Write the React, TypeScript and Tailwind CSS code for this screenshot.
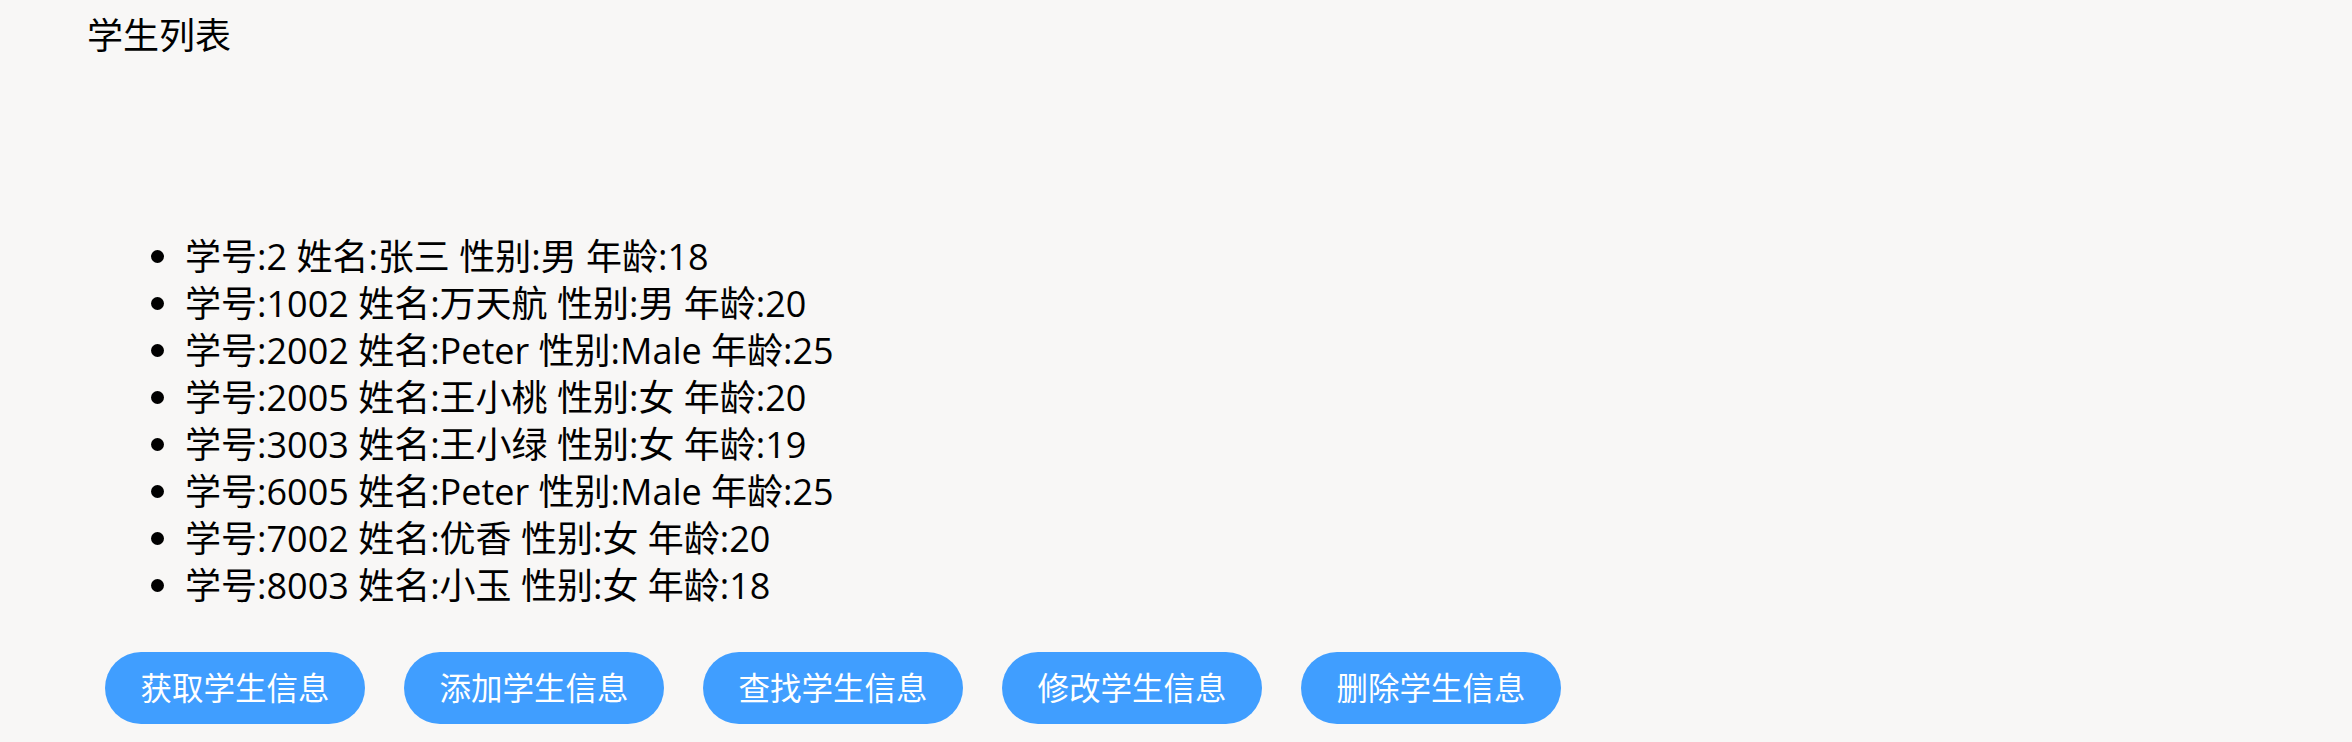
import React from 'react';

interface Student {
  id: number;
  name: string;
  gender: string;
  age: number;
}

const students: Student[] = [
  { id: 2, name: '张三', gender: '男', age: 18 },
  { id: 1002, name: '万天航', gender: '男', age: 20 },
  { id: 2002, name: 'Peter', gender: 'Male', age: 25 },
  { id: 2005, name: '王小桃', gender: '女', age: 20 },
  { id: 3003, name: '王小绿', gender: '女', age: 19 },
  { id: 6005, name: 'Peter', gender: 'Male', age: 25 },
  { id: 7002, name: '优香', gender: '女', age: 20 },
  { id: 8003, name: '小玉', gender: '女', age: 18 },
];

const actions = ['获取学生信息', '添加学生信息', '查找学生信息', '修改学生信息', '删除学生信息'];

const App: React.FC = () => {
  return (
    <div className="min-h-[742px] bg-[#f8f7f6] text-black font-['Open_Sans','Noto_Sans_CJK_SC',sans-serif]">
      {/* Title */}
      <h1 className="pt-[12px] pl-[87px] text-[36px] leading-[47px] font-normal">学生列表</h1>

      {/* Student list */}
      <ul className="mt-[174px] pl-[151px] flex flex-col">
        {students.map((s) => (
          <li key={s.id} className="flex items-center text-[36px] leading-[47px] whitespace-pre">
            <span className="w-[13px] h-[13px] rounded-full bg-black mr-[21px] shrink-0" />
            <span>{`学号:${s.id} 姓名:${s.name} 性别:${s.gender} 年龄:${s.age}`}</span>
          </li>
        ))}
      </ul>

      {/* Action buttons */}
      <div className="mt-[43px] pl-[105px] flex gap-[39px]">
        {actions.map((label) => (
          <button
            key={label}
            className="w-[260px] h-[72px] rounded-full bg-[#409eff] text-white text-[31.5px] leading-none flex items-center justify-center"
          >
            {label}
          </button>
        ))}
      </div>
    </div>
  );
};

export default App;
